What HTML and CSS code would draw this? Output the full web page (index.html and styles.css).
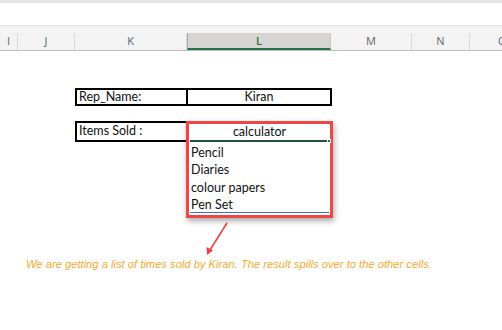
FILE: index.html
```html
<!DOCTYPE html>
<html lang="en">
<head>
    <meta charset="UTF-8">
    <title>Items Sold</title>
    <link rel="stylesheet" href="styles.css">
</head>
<body>
    <div class="ribbon-edge"></div>
    <div class="col-headers">
        <div class="col-head" style="width: 18px">I</div>
        <div class="col-head" style="width: 57px">J</div>
        <div class="col-head" style="width: 112px">K</div>
        <div class="col-head selected" style="width: 144px">L</div>
        <div class="col-head" style="width: 81px">M</div>
        <div class="col-head" style="width: 58px">N</div>
        <div class="col-head last" style="width: 32px">O</div>
    </div>

    <div class="sheet">
        <div class="box">
            <div class="cell label">Rep_Name:</div>
            <div class="cell value">Kiran</div>
        </div>

        <div class="spill-row">
            <div class="box items-box">
                <div class="cell label">Items Sold :</div>
            </div>
            <div class="spill">
                <div class="spill-head">calculator<span class="fill-handle"></span></div>
                <ul class="spill-list">
                    <li>Pencil</li>
                    <li>Diaries</li>
                    <li>colour papers</li>
                    <li>Pen Set</li>
                </ul>
            </div>
        </div>

        <svg class="pointer" width="502" height="40" viewBox="0 0 502 40">
            <line x1="227" y1="5" x2="210" y2="32" stroke="#ef4343" stroke-width="1.6"/>
            <polygon points="207,37 206.5,29 213,32.5" fill="#ef4343"/>
        </svg>
        <p class="note">We are getting a list of times sold by Kiran. The result spills over to the other cells.</p>
    </div>
</body>
</html>
```

FILE: styles.css
```css
* {
    margin: 0;
    padding: 0;
    box-sizing: border-box;
}

body {
    background: #fff;
    width: 502px;
    height: 330px;
    overflow: hidden;
    font-family: Lato, 'Liberation Sans', sans-serif;
}

.ribbon-edge {
    height: 3px;
    background: #e4e4e4;
    margin-bottom: 22px;
}

/* column letters */
.col-headers {
    display: flex;
    height: 26px;
    background: #f3f3f3;
    border-top: 1px solid #e2e2e2;
    border-bottom: 1px solid #bcbcbc;
    white-space: nowrap;
    overflow: hidden;
}

.col-head {
    flex: none;
    margin-top: 7px;
    height: 17px;
    border-right: 1px solid #dadada;
    text-align: center;
    font-family: 'Open Sans', 'Noto Sans', sans-serif;
    font-size: 11px;
    line-height: 16px;
    color: #5a6470;
}

.col-head.selected {
    background: #d6d5d3;
    border-left: 1px solid #a9a9a9;
    border-right: 1px solid #c8c8c8;
    border-bottom: 2px solid #217346;
    color: #217346;
    font-weight: 600;
    line-height: 15px;
}

/* only the edge of the next letter shows */
.col-head.last {
    border-right: none;
    text-align: left;
    padding-left: 28px;
    overflow: hidden;
}

/* cells */
.sheet {
    padding: 37px 0 0 75px;
}

.box {
    display: flex;
    width: 257px;
    height: 18px;
    border: 2px solid #000;
    font-size: 12.5px;
    line-height: 14px;
    color: #111;
}

.cell.label {
    width: 111px;
    padding-left: 2px;
    border-right: 2px solid #000;
}

.cell.value {
    flex: 1;
    text-align: center;
}

.spill-row {
    display: flex;
    align-items: flex-start;
    margin-top: 15px;
}

.items-box {
    width: 113px;
    height: 21px;
    margin-right: -2px;
}

.items-box .cell.label {
    border-right: none;
    line-height: 16px;
}

.spill {
    position: relative;
    width: 147px;
    border: 3px solid #f04545;
    box-shadow: 1px 3px 6px rgba(0, 0, 0, 0.35);
    background: #fff;
    font-size: 12.5px;
    color: #111;
}

.spill-head {
    position: relative;
    height: 18px;
    margin: 0 1px;
    border-bottom: 2px solid #24513a;
    text-align: center;
    line-height: 15px;
}

.fill-handle {
    position: absolute;
    right: -2px;
    bottom: -3px;
    width: 4px;
    height: 4px;
    background: #217346;
    border: 1px solid #fff;
}

.spill-list {
    list-style: none;
    margin: 0 1px;
    padding-top: 1px;
    padding-bottom: 2px;
}

.spill-list li {
    height: 17.4px;
    line-height: 19px;
    padding-left: 1px;
}

.spill-list li:last-child {
    border-bottom: 1px solid #3c6fc4;
}

.pointer {
    display: block;
    margin-left: -75px;
}

.note {
    margin-left: -49px;
    font-family: 'Liberation Sans', Arial, sans-serif;
    font-style: italic;
    font-size: 11.2px;
    line-height: 13px;
    color: #f2a930;
    white-space: nowrap;
}
```
